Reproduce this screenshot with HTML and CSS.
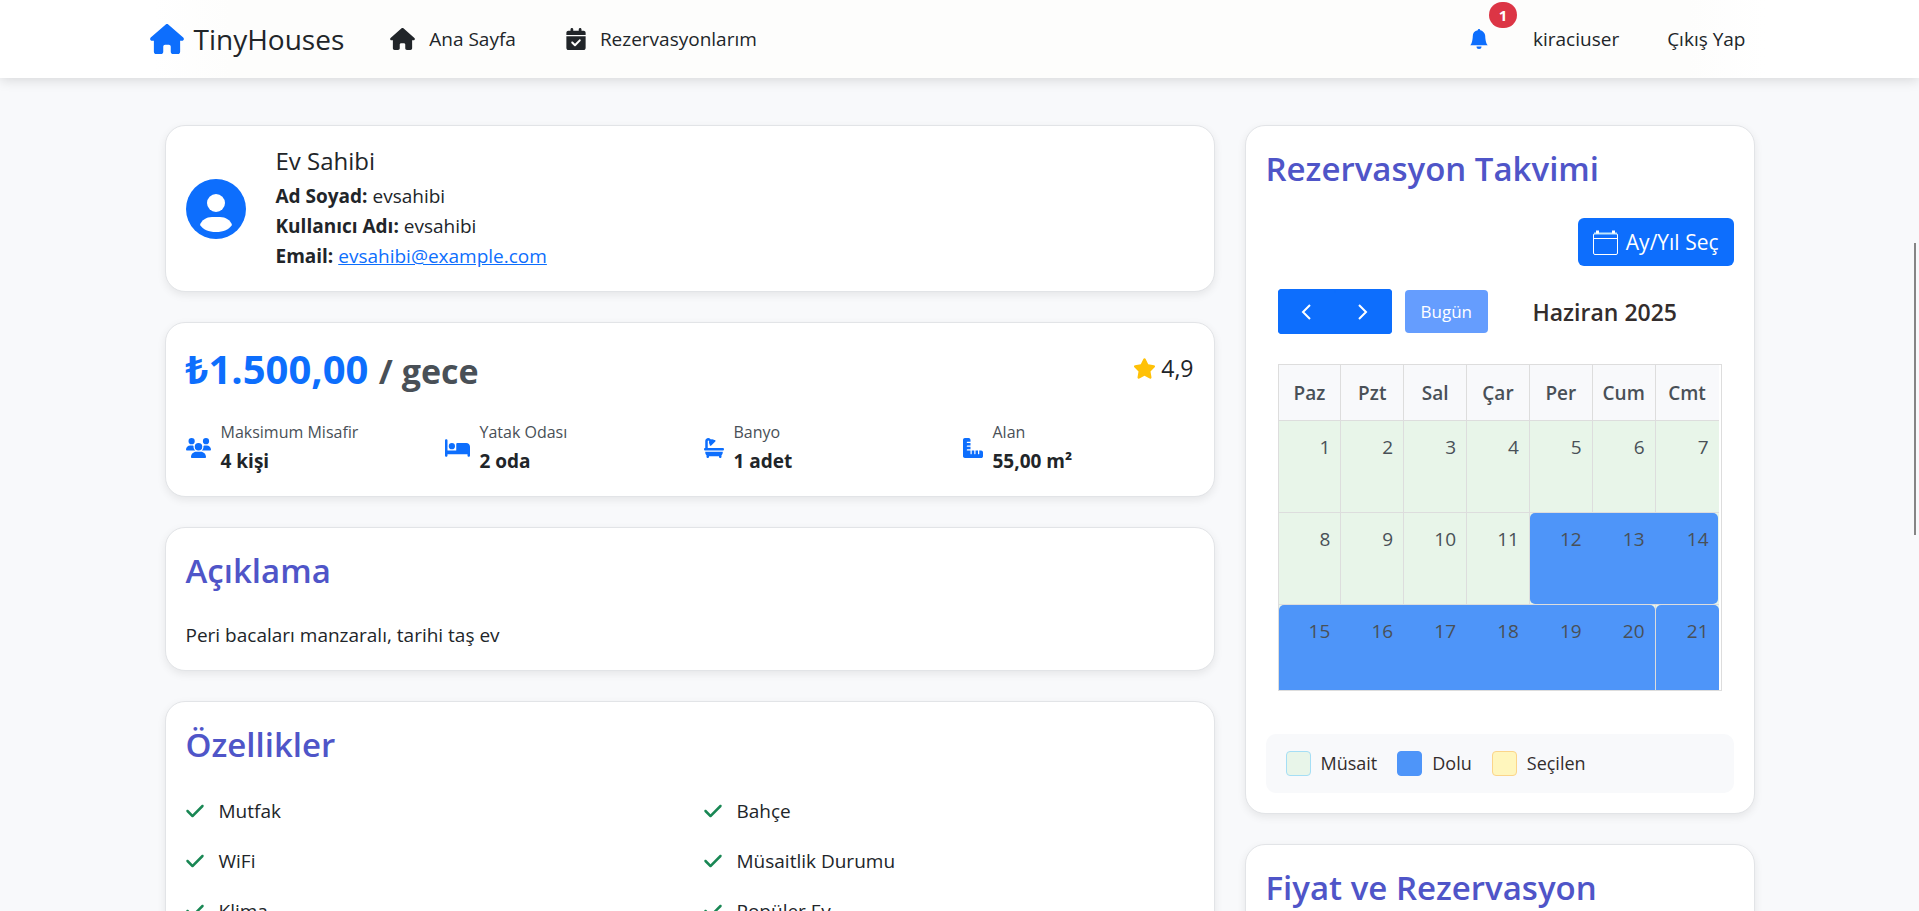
FILE: index.html
```html
<!DOCTYPE html>
<html lang="tr">
<head>
<meta charset="utf-8">
<meta name="viewport" content="width=device-width, initial-scale=1">
<title>TinyHouses</title>
<link rel="stylesheet" href="styles.css">
</head>
<body>
<svg class="sprite" aria-hidden="true">
  <symbol id="i-house" viewBox="0 0 576 512"><path d="M575.8 255.5c0 18-15 32.1-32 32.1h-32l.7 160.2c0 2.7-.2 5.4-.5 8.1V472c0 22.1-17.9 40-40 40H456c-1.1 0-2.2 0-3.3-.1c-1.4 .1-2.8 .1-4.2 .1H416 392c-22.1 0-40-17.9-40-40V448 384c0-17.7-14.3-32-32-32H256c-17.7 0-32 14.3-32 32v64 24c0 22.1-17.9 40-40 40H160 128.1c-1.5 0-3-.1-4.5-.2c-1.2 .1-2.4 .2-3.6 .2H104c-22.1 0-40-17.9-40-40V360c0-.9 0-1.9 .1-2.8V287.6H32c-18 0-32-14-32-32.1c0-9 3-17 10-24L266.4 8c7-7 15-8 22-8s15 2 21 7L564.8 231.5c8 7 12 15 11 24z"/></symbol>
  <symbol id="i-cal-check" viewBox="0 0 448 512"><path d="M128 0c17.7 0 32 14.3 32 32V64H288V32c0-17.7 14.3-32 32-32s32 14.3 32 32V64h48c26.5 0 48 21.5 48 48v48H0V112C0 85.5 21.5 64 48 64H96V32c0-17.7 14.3-32 32-32zM0 192H448V464c0 26.5-21.5 48-48 48H48c-26.5 0-48-21.5-48-48V192zM329 305c9.4-9.4 9.4-24.6 0-33.9s-24.6-9.4-33.9 0l-95 95-47-47c-9.4-9.4-24.6-9.4-33.9 0s-9.4 24.6 0 33.9l64 64c9.4 9.4 24.6 9.4 33.9 0L329 305z"/></symbol>
  <symbol id="i-bell" viewBox="0 0 16 16"><path d="M8 16a2 2 0 0 0 2-2H6a2 2 0 0 0 2 2m.995-14.901a1 1 0 1 0-1.99 0A5 5 0 0 0 3 6c0 1.098-.5 6-2 7h14c-1.5-1-2-5.902-2-7 0-2.42-1.72-4.44-4.005-4.901"/></symbol>
  <symbol id="i-users" viewBox="0 0 640 512"><path d="M144 0a80 80 0 1 1 0 160A80 80 0 1 1 144 0zM512 0a80 80 0 1 1 0 160A80 80 0 1 1 512 0zM0 298.7C0 239.8 47.8 192 106.7 192h42.7c15.9 0 31 3.5 44.6 9.7c-1.3 7.2-1.9 14.7-1.9 22.3c0 38.2 16.8 72.5 43.3 96c-.2 0-.4 0-.7 0H21.3C9.6 320 0 310.4 0 298.7zM405.3 320c-.2 0-.4 0-.7 0c26.6-23.5 43.3-57.8 43.3-96c0-7.6-.7-15-1.9-22.3c13.6-6.3 28.7-9.7 44.6-9.7h42.7C592.2 192 640 239.8 640 298.7c0 11.8-9.6 21.3-21.3 21.3H405.3zM224 224a96 96 0 1 1 192 0 96 96 0 1 1 -192 0zM128 485.3C128 411.7 187.7 352 261.3 352H378.7C452.3 352 512 411.7 512 485.3c0 14.7-11.9 26.7-26.7 26.7H154.7c-14.7 0-26.7-11.9-26.7-26.7z"/></symbol>
  <symbol id="i-bed" viewBox="0 0 640 512"><path d="M32 32c17.7 0 32 14.3 32 32V320H288V160c0-17.7 14.3-32 32-32H544c53 0 96 43 96 96V448c0 17.7-14.3 32-32 32s-32-14.3-32-32V416H352 320 64v32c0 17.7-14.3 32-32 32s-32-14.3-32-32V64C0 46.3 14.3 32 32 32zm144 96a80 80 0 1 1 0 160 80 80 0 1 1 0-160z"/></symbol>
  <symbol id="i-bath" viewBox="0 0 512 512"><path d="M96 77.3c0-7.3 5.9-13.3 13.3-13.3c3.5 0 6.9 1.4 9.4 3.9l14.9 14.9C130 91.8 128 101.7 128 112c0 19.9 7.2 38 19.2 52c-5.3 9.2-4 21.1 3.8 29c9.4 9.4 24.6 9.4 33.9 0L289 89c9.4-9.4 9.4-24.6 0-33.9c-7.9-7.9-19.8-9.1-29-3.8C246 39.2 227.9 32 208 32c-10.3 0-20.2 2-29.2 5.5L163.9 22.6C149.4 8.1 129.7 0 109.3 0C66.6 0 32 34.6 32 77.3V256c-17.7 0-32 14.3-32 32s14.3 32 32 32H480c17.7 0 32-14.3 32-32s-14.3-32-32-32H96V77.3zM32 352v16c0 28.4 12.4 54 32 71.6V480c0 17.7 14.3 32 32 32s32-14.3 32-32V464H384v16c0 17.7 14.3 32 32 32s32-14.3 32-32V439.6c19.6-17.6 32-43.1 32-71.6V352H32z"/></symbol>
  <symbol id="i-ruler" viewBox="0 0 512 512"><path d="M.2 468.9C2.7 493.1 23.1 512 48 512l96 0 320 0c26.5 0 48-21.5 48-48l0-96c0-26.5-21.5-48-48-48l-48 0 0 80c0 8.8-7.2 16-16 16s-16-7.2-16-16l0-80-64 0 0 80c0 8.8-7.2 16-16 16s-16-7.2-16-16l0-80-64 0 0 80c0 8.8-7.2 16-16 16s-16-7.2-16-16l0-80-80 0c-8.8 0-16-7.2-16-16s7.2-16 16-16l80 0 0-64-80 0c-8.8 0-16-7.2-16-16s7.2-16 16-16l80 0 0-64-80 0c-8.8 0-16-7.2-16-16s7.2-16 16-16l80 0 0-48c0-26.5-21.5-48-48-48L48 0C21.5 0 0 21.5 0 48L0 368l0 96c0 1.7 .1 3.3 .2 4.9z"/></symbol>
  <symbol id="i-star" viewBox="0 0 576 512"><path d="M316.9 18C311.6 7 300.4 0 288.1 0s-23.4 7-28.8 18L195 150.3 51.4 171.5c-12 1.8-22 10.2-25.7 21.7s-.7 24.2 7.9 32.7L137.8 329 113.2 474.7c-2 12 3 24.2 12.9 31.3s23 8 33.8 2.3l128.3-68.5 128.3 68.5c10.8 5.7 23.9 4.9 33.8-2.3s14.9-19.3 12.9-31.3L438.5 329 542.7 225.9c8.6-8.5 11.7-21.2 7.9-32.7s-13.7-19.9-25.7-21.7L381.2 150.3 316.9 18z"/></symbol>
  <symbol id="i-check" viewBox="0 0 448 512"><path d="M438.6 105.4c12.5 12.5 12.5 32.8 0 45.3l-256 256c-12.5 12.5-32.8 12.5-45.3 0l-128-128c-12.5-12.5-12.5-32.8 0-45.3s32.8-12.5 45.3 0L160 338.7 393.4 105.4c12.5-12.5 32.8-12.5 45.3 0z"/></symbol>
</svg>

<header class="navbar">
  <div class="navbar-inner">
    <a class="brand" href="#"><svg class="brand-icon"><use href="#i-house"/></svg>TinyHouses</a>
    <nav class="nav-links">
      <a class="nav-link" href="#"><svg class="icon-home"><use href="#i-house"/></svg>Ana Sayfa</a>
      <a class="nav-link" href="#"><svg class="icon-cal"><use href="#i-cal-check"/></svg>Rezervasyonlarım</a>
    </nav>
    <nav class="nav-user">
      <a class="nav-bell" href="#" aria-label="Bildirimler"><svg class="icon-bell"><use href="#i-bell"/></svg><span class="badge">1</span></a>
      <a class="nav-link" href="#">kiraciuser</a>
      <a class="nav-link" href="#">Çıkış Yap</a>
    </nav>
  </div>
</header>

<main class="page">
  <div class="column-main">
    <section class="card host">
      <svg class="avatar" viewBox="0 0 60 60"><circle cx="30" cy="30" r="30" fill="#0d6efd"/><circle cx="30" cy="24" r="9" fill="#fff"/><path d="M30 53c-7.500 0-13-2.500-16-7 1.500-5 6.500-8 12-8h8c5.500 0 10.500 3 12 8-3 4.500-8.500 7-16 7z" fill="#fff"/></svg>
      <div>
        <h2 class="host-title">Ev Sahibi</h2>
        <p class="line"><strong>Ad Soyad:</strong> evsahibi</p>
        <p class="line"><strong>Kullanıcı Adı:</strong> evsahibi</p>
        <p class="line"><strong>Email:</strong> <a href="mailto:evsahibi@example.com">evsahibi@example.com</a></p>
      </div>
    </section>

    <section class="card">
      <div class="price-row">
        <p class="price">₺1.500,00 <span class="per">/ gece</span></p>
        <p class="rating"><svg class="icon-star"><use href="#i-star"/></svg>4,9</p>
      </div>
      <dl class="facts">
        <div class="fact"><svg class="icon-wide"><use href="#i-users"/></svg><div><dt>Maksimum Misafir</dt><dd>4 kişi</dd></div></div>
        <div class="fact"><svg class="icon-wide"><use href="#i-bed"/></svg><div><dt>Yatak Odası</dt><dd>2 oda</dd></div></div>
        <div class="fact"><svg class="icon-square"><use href="#i-bath"/></svg><div><dt>Banyo</dt><dd>1 adet</dd></div></div>
        <div class="fact"><svg class="icon-square"><use href="#i-ruler"/></svg><div><dt>Alan</dt><dd>55,00 m²</dd></div></div>
      </dl>
    </section>

    <section class="card">
      <h2 class="card-title">Açıklama</h2>
      <p class="line">Peri bacaları manzaralı, tarihi taş ev</p>
    </section>

    <section class="card">
      <h2 class="card-title features-title">Özellikler</h2>
      <ul class="features">
        <li><svg class="icon-check"><use href="#i-check"/></svg>Mutfak</li>
        <li><svg class="icon-check"><use href="#i-check"/></svg>Bahçe</li>
        <li><svg class="icon-check"><use href="#i-check"/></svg>WiFi</li>
        <li><svg class="icon-check"><use href="#i-check"/></svg>Müsaitlik Durumu</li>
        <li><svg class="icon-check"><use href="#i-check"/></svg>Klima</li>
        <li><svg class="icon-check"><use href="#i-check"/></svg>Popüler Ev</li>
      </ul>
    </section>
  </div>

  <aside class="column-side">
    <section class="card">
      <h2 class="card-title">Rezervasyon Takvimi</h2>
      <div class="picker-row">
        <button class="btn btn-picker" type="button"><svg class="icon-picker" viewBox="0 0 25 25" fill="none" stroke="#fff"><rect x="0.500" y="3.500" width="24" height="21" rx="1.500"/><path d="M1 3.500h23" stroke="#bfe6fb" stroke-width="2"/><path d="M1 8.500h23"/><path d="M4.500 .5v3M20.500 .5v3" stroke-width="3"/></svg>Ay/Yıl Seç</button>
      </div>
      <div class="calendar">
        <div class="toolbar">
          <div class="btn-group">
            <button class="btn btn-step" type="button" aria-label="Önceki"><svg viewBox="0 0 12 18"><path d="M10 2 3 9l7 7"/></svg></button>
            <button class="btn btn-step" type="button" aria-label="Sonraki"><svg viewBox="0 0 12 18"><path d="M2 2l7 7-7 7"/></svg></button>
          </div>
          <button class="btn btn-today" type="button" disabled>Bugün</button>
          <h3 class="month">Haziran 2025</h3>
        </div>
        <div class="scroller">
          <table class="days">
            <thead>
              <tr><th scope="col">Paz</th><th scope="col">Pzt</th><th scope="col">Sal</th><th scope="col">Çar</th><th scope="col">Per</th><th scope="col">Cum</th><th scope="col">Cmt</th></tr>
            </thead>
            <tbody>
              <tr><td><span>1</span></td><td><span>2</span></td><td><span>3</span></td><td><span>4</span></td><td><span>5</span></td><td><span>6</span></td><td><span>7</span></td></tr>
              <tr><td><span>8</span></td><td><span>9</span></td><td><span>10</span></td><td><span>11</span></td><td><i class="busy span-3"></i><span>12</span></td><td><span>13</span></td><td><span>14</span></td></tr>
              <tr><td><i class="busy span-6"></i><span>15</span></td><td><span>16</span></td><td><span>17</span></td><td><span>18</span></td><td><span>19</span></td><td><span>20</span></td><td><i class="busy span-1"></i><span>21</span></td></tr>
            </tbody>
          </table>
        </div>
      </div>
      <ul class="legend">
        <li><i class="swatch free"></i>Müsait</li>
        <li><i class="swatch taken"></i>Dolu</li>
        <li><i class="swatch chosen"></i>Seçilen</li>
      </ul>
    </section>
    <section class="card">
      <h2 class="card-title">Fiyat ve Rezervasyon</h2>
    </section>
  </aside>
</main>
<div class="scroll-thumb"></div>
</body>
</html>
```
FILE: styles.css
```css
* { box-sizing: border-box; }
body {
  margin: 0;
  height: 100vh;
  overflow: hidden;
  background: #f8f9fb;
  color: #212529;
  font-family: "Open Sans", "Noto Sans", sans-serif;
  font-size: 19px;
  line-height: 30px;
}
h2, h3, p, ul, dl, dd { margin: 0; padding: 0; }
ul { list-style: none; }
svg { flex: none; fill: currentColor; }
button { font-family: inherit; }
.sprite { position: absolute; width: 0; height: 0; }

.navbar {
  position: relative;
  background: linear-gradient(90deg, #fff 8%, #fdfdfc 12%, #fdfdfc 88%, #fff 92%);
  box-shadow: 0 2px 12px rgba(0, 0, 0, 0.14);
}
.navbar-inner {
  display: flex;
  align-items: center;
  max-width: 1620px;
  height: 78px;
  margin: 0 auto;
}
.navbar a { color: #212529; text-decoration: none; }
.brand { display: flex; align-items: center; gap: 10px; font-size: 28px; }
.brand-icon { width: 34px; height: 30px; color: #0d6efd; }
.nav-links { display: flex; gap: 50px; margin-left: 46px; }
.nav-link { display: flex; align-items: center; gap: 14px; }
.icon-home { width: 25px; height: 22px; }
.icon-cal { width: 20px; height: 22px; }
.nav-user { display: flex; gap: 48px; margin-left: auto; padding-right: 24px; }
.nav-bell { position: relative; display: flex; align-items: center; margin-right: -4px; }
.navbar .nav-bell { color: #0d6efd; }
.icon-bell { width: 20px; height: 20px; }
.badge {
  position: absolute;
  left: 20px;
  bottom: 26px;
  width: 28px;
  height: 26px;
  border-radius: 13px;
  background: #dc3545;
  color: #fff;
  font-size: 15px;
  font-weight: 700;
  line-height: 26px;
  text-align: center;
}

.page {
  display: grid;
  grid-template-columns: repeat(12, minmax(0, 1fr));
  gap: 30px;
  align-items: start;
  max-width: 1590px;
  margin: 47px auto 0;
}
.column-main { grid-column: span 8; display: grid; gap: 30px; }
.column-side { grid-column: span 4; display: grid; gap: 30px; }
.card {
  padding: 20px;
  border: 1px solid #e2e4e7;
  border-radius: 20px;
  background: #fff;
  box-shadow: 0 3px 8px rgba(0, 0, 0, 0.08);
}
.card-title { color: #4f55c8; font-size: 33px; font-weight: 600; line-height: 46px; margin-bottom: 26px; }

.host { display: flex; align-items: center; gap: 30px; }
.avatar { width: 60px; height: 60px; }
.host-title { font-size: 24px; font-weight: 400; line-height: 30px; margin-bottom: 5px; }
.host a { color: #0d6efd; }

.price-row { display: flex; justify-content: space-between; align-items: flex-start; margin-bottom: 22px; }
.price { color: #0d6efd; font-size: 40px; font-weight: 700; line-height: 52px; }
.per { color: #495057; font-size: 34px; }
.rating { display: flex; align-items: center; gap: 5px; font-size: 23px; line-height: 50px; }
.icon-star { width: 23px; height: 21px; color: #ffc107; }
.facts { display: grid; grid-template-columns: repeat(4, minmax(0, 1fr)); gap: 28px; }
.fact { display: flex; align-items: center; gap: 10px; }
.fact svg { color: #0d6efd; }
.fact dt { color: #495057; font-size: 16px; line-height: 27px; }
.fact dd { font-weight: 700; line-height: 30px; }
.icon-wide { width: 25px; height: 20px; }
.icon-square { width: 20px; height: 20px; }

.features-title { margin-bottom: 18px; }
.features { display: grid; grid-template-columns: repeat(2, minmax(0, 1fr)); column-gap: 28px; }
.features li { display: flex; align-items: center; gap: 15px; height: 50px; }
.icon-check { width: 18px; height: 20px; color: #198754; }

.btn { border: 0; border-radius: 6px; background: #0d6efd; color: #fff; }
.picker-row { display: flex; justify-content: flex-end; margin-bottom: 23px; }
.btn-picker { display: flex; align-items: center; gap: 8px; height: 48px; padding: 0 15px; font-size: 21px; }
.icon-picker { width: 25px; height: 25px; fill: none; }
.calendar { padding: 0 12px; }
.toolbar { display: flex; align-items: center; margin-bottom: 30px; }
.btn-group { display: flex; margin-right: 13px; border-radius: 4px; background: #0d6efd; }
.btn-step { display: flex; align-items: center; justify-content: center; width: 57px; height: 45px; padding: 0; border-radius: 4px; }
.btn-step svg { width: 12px; height: 18px; fill: none; stroke: #fff; stroke-width: 2; }
.btn-today { height: 43px; padding: 0 16px; border-radius: 4px; background: #659dfe; font-size: 17px; }
.month { flex: 1; color: #332d2d; font-size: 23px; font-weight: 600; text-align: center; }
.scroller { height: 327px; padding-right: 2px; overflow: hidden; border: 1px solid #ddd; }
.days { width: 100%; table-layout: fixed; border-spacing: 0; color: #495057; }
.days th, .days td { padding: 0; border-right: 1px solid #ddd; border-bottom: 1px solid #ddd; }
.days th { height: 56px; background: #f8f9fb; font-weight: 600; }
.days td { position: relative; height: 92px; padding: 11px 10px; background: #e8f5e9; text-align: right; vertical-align: top; }
.days th:last-child, .days td:last-child { border-right: 0; }
.days span { position: relative; z-index: 2; }
.busy { position: absolute; z-index: 1; top: 0; left: 0; height: 91px; border-radius: 5px; background: #4e95f9; }
.span-1 { width: 100%; }
.span-3 { width: calc(300% + 3px); }
.span-6 { width: calc(600% + 5px); }

.legend { display: flex; gap: 20px; margin-top: 43px; padding: 15px 20px; border-radius: 10px; background: #f8f9fb; color: #332d2d; font-size: 18px; }
.legend li { display: flex; align-items: center; gap: 10px; line-height: 29px; }
.swatch { width: 25px; height: 25px; border: 1px solid; border-radius: 4px; }
.free { background: #e8f5e9; border-color: #a5def5; }
.taken { background: #4e95f9; border-color: #4e95f9; }
.chosen { background: #fff6bd; border-color: #fbd58a; }

.scroll-thumb { position: fixed; top: 243px; right: 3px; width: 2px; height: 292px; background: #858585; }
```
